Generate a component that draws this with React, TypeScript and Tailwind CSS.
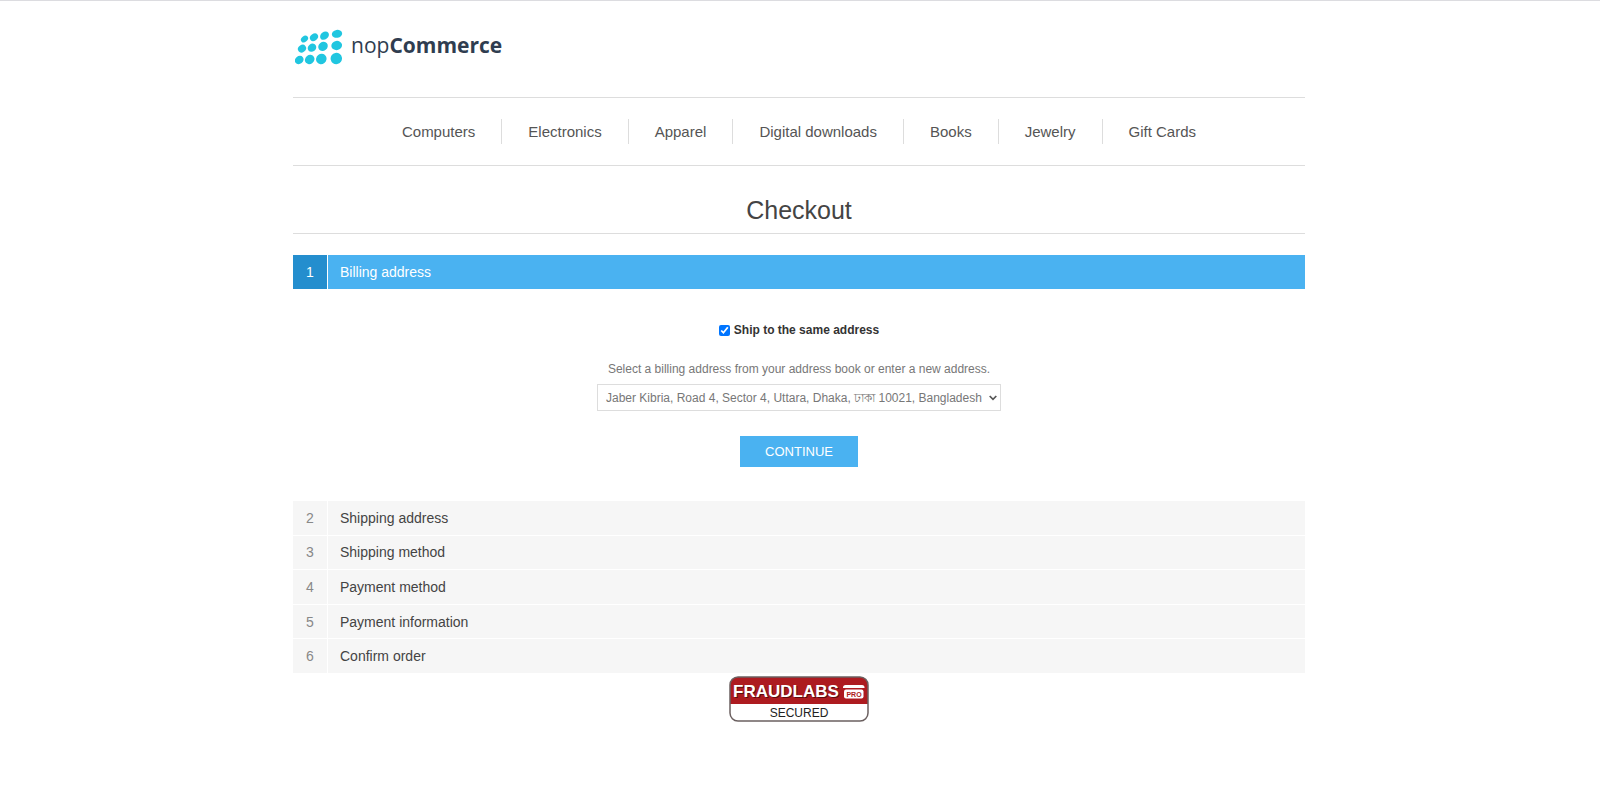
import React, { useState } from 'react';

interface Step {
    number: number;
    title: string;
}

const categories = ['Computers', 'Electronics', 'Apparel', 'Digital downloads', 'Books', 'Jewelry', 'Gift Cards'];

const nextSteps: Step[] = [
    { number: 2, title: 'Shipping address' },
    { number: 3, title: 'Shipping method' },
    { number: 4, title: 'Payment method' },
    { number: 5, title: 'Payment information' },
    { number: 6, title: 'Confirm order' },
];

// cx, cy, rx, ry for every dot of the logo
const dots = [
    [9.5, 10, 3.9, 3],
    [19, 8.3, 4.4, 3.4],
    [29.5, 6.7, 4.8, 3.7],
    [42, 4.8, 5.2, 3.9],
    [7, 19.6, 4.3, 3.6],
    [17, 18.7, 4.5, 3.9],
    [28, 17.4, 5, 4.4],
    [41.7, 16.5, 5.4, 4.6],
    [4.2, 31, 4.6, 3.9],
    [14.7, 30.5, 5, 4.4],
    [26.3, 30, 5.4, 5],
    [41.3, 29.5, 5.7, 5.7],
];

const Logo: React.FC = () => (
    <a href="#" className="flex items-start gap-2 pl-0.5 text-[#2f3d50]">
        <svg width="48" height="36" viewBox="0 0 48 36" fill="#20c6e0" aria-hidden="true">
            {dots.map(([cx, cy, rx, ry], index) => (
                <ellipse key={index} cx={cx} cy={cy} rx={rx} ry={ry} transform={`rotate(${index % 4 === 3 ? -10 : -38} ${cx} ${cy})`} />
            ))}
        </svg>
        <span className="font-['Open_Sans',sans-serif] text-[21px] leading-8">
            nop<span className="font-bold">Commerce</span>
        </span>
    </a>
);

const FraudLabsBadge: React.FC = () => (
    <svg width="140" height="46" viewBox="0 0 140 46" className="font-['Liberation_Sans',Arial,sans-serif]">
        <rect x="1" y="1" width="138" height="44" rx="8" fill="#fff" />
        <path d="M1 28V9a8 8 0 0 1 8-8h122a8 8 0 0 1 8 8v19z" fill="#ad1b20" />
        <rect x="1" y="1" width="138" height="44" rx="8" fill="none" stroke="#6b6060" strokeWidth="1.5" />
        <text x="5" y="22" fontSize="17" fontWeight="700" fill="#5c0c0f">FRAUDLABS</text>
        <text x="4" y="21" fontSize="17" fontWeight="700" fill="#fff">FRAUDLABS</text>
        <path d="M114 11.500a2.500 2.500 0 0 1 2.500-2.500h16.500a2.500 2.500 0 0 1 2.500 2.500v.5h-21.500z" fill="#fff" />
        <rect x="115" y="13.500" width="19.500" height="9" rx="2" fill="#fff" />
        <text x="125" y="20.500" fontSize="7" fontWeight="700" fill="#ad1b20" textAnchor="middle">PRO</text>
        <text x="70" y="41" fontSize="12" fill="#222" textAnchor="middle">SECURED</text>
    </svg>
);

const App: React.FC = () => {
    const [sameAddress, setSameAddress] = useState(true);

    return (
        <div className="border-t border-[#dcdce0] bg-white pr-0.5 font-['Liberation_Sans',Arial,sans-serif] text-xs text-[#777]">
            <div className="mx-auto max-w-[1012px]">
                <header className="flex h-24 items-start pt-7">
                    <Logo />
                </header>

                <nav className="flex justify-center border-y border-[#ddd] py-[21px]">
                    <ul className="flex divide-x divide-[#ddd]">
                        {categories.map((name) => (
                            <li key={name} className="px-[26px]">
                                <a href="#" className="block text-[15px] leading-[25px] text-[#555]">{name}</a>
                            </li>
                        ))}
                    </ul>
                </nav>

                <main>
                    <h1 className="mt-7 mb-[21px] border-b border-[#ddd] pb-[7px] text-center text-[25px] leading-8 text-[#444]">
                        Checkout
                    </h1>

                    <section>
                        <div className="flex h-[34px] items-stretch gap-px text-sm text-white">
                            <span className="flex w-[34px] items-center justify-center bg-[#248ece]">1</span>
                            <h2 className="flex flex-1 items-center bg-[#4ab2f1] pl-3">Billing address</h2>
                        </div>

                        <form className="flex flex-col items-center pt-8 pb-[34px]" onSubmit={(e) => e.preventDefault()}>
                            <label className="flex items-center gap-1 font-bold leading-[18px] text-[#333]">
                                <input
                                    type="checkbox"
                                    className="h-[11px] w-[11px]"
                                    checked={sameAddress}
                                    onChange={(e) => setSameAddress(e.target.checked)}
                                />
                                Ship to the same address
                            </label>
                            <label htmlFor="billingAddress" className="mt-[21px] leading-[18px]">
                                Select a billing address from your address book or enter a new address.
                            </label>
                            <div className="relative mt-1.5">
                                <select
                                    id="billingAddress"
                                    className="block h-[27px] w-[404px] appearance-none border border-[#ddd] bg-white pl-2 text-xs text-[#777]"
                                >
                                    <option>Jaber Kibria, Road 4, Sector 4, Uttara, Dhaka, ঢাকা 10021, Bangladesh</option>
                                    <option>New Address</option>
                                </select>
                                <svg
                                    className="pointer-events-none absolute top-[11px] right-1"
                                    width="8"
                                    height="6"
                                    viewBox="0 0 8 6"
                                    fill="none"
                                    stroke="#555"
                                    strokeWidth="1.7"
                                    aria-hidden="true"
                                >
                                    <path d="M.7 1 4 4.300 7.300 1" />
                                </svg>
                            </div>
                            <button type="submit" className="mt-[25px] h-[31px] w-[118px] bg-[#4ab2f1] text-[13px] text-white">
                                CONTINUE
                            </button>
                        </form>
                    </section>

                    <ol className="grid min-h-[172px] auto-rows-fr gap-px text-sm">
                        {nextSteps.map((step) => (
                            <li key={step.number} className="flex items-stretch gap-px">
                                <span className="flex w-[34px] items-center justify-center bg-[#f6f6f6] text-[#888]">{step.number}</span>
                                <h2 className="flex flex-1 items-center bg-[#f6f6f6] pl-3 text-[#444]">{step.title}</h2>
                            </li>
                        ))}
                    </ol>
                </main>

                <footer className="flex justify-center pt-[3px]">
                    <a href="#" aria-label="FraudLabs Pro Secured">
                        <FraudLabsBadge />
                    </a>
                </footer>
            </div>
        </div>
    );
};

export default App;
